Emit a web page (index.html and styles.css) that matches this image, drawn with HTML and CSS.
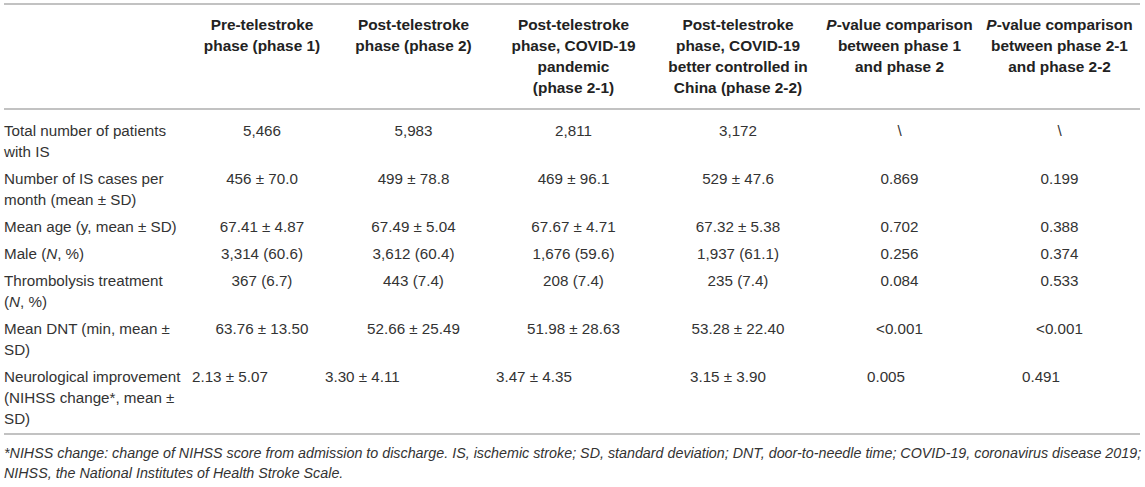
FILE: index.html
```html
<!DOCTYPE html>
<html>
<head>
<meta charset="utf-8">
<link rel="stylesheet" href="styles.css">
</head>
<body>
<div class="wrap">
<table class="tbl">
<colgroup>
<col class="c-label"><col class="c-1"><col class="c-2"><col class="c-3"><col class="c-4"><col class="c-5"><col class="c-6">
</colgroup>
<thead>
<tr>
<th></th>
<th>Pre-telestroke<br>phase (phase 1)</th>
<th>Post-telestroke<br>phase (phase 2)</th>
<th>Post-telestroke<br>phase, COVID-19<br>pandemic<br>(phase 2-1)</th>
<th>Post-telestroke<br>phase, COVID-19<br>better controlled in<br>China (phase 2-2)</th>
<th><i>P</i>-value comparison<br>between phase 1<br>and phase 2</th>
<th><i>P</i>-value comparison<br>between phase 2-1<br>and phase 2-2</th>
</tr>
</thead>
<tbody>
<tr class="first">
<td>Total number of patients<br>with IS</td>
<td>5,466</td><td>5,983</td><td>2,811</td><td>3,172</td><td>\</td><td>\</td>
</tr>
<tr>
<td>Number of IS cases per<br>month (mean ± SD)</td>
<td>456 ± 70.0</td><td>499 ± 78.8</td><td>469 ± 96.1</td><td>529 ± 47.6</td><td>0.869</td><td>0.199</td>
</tr>
<tr>
<td>Mean age (y, mean ± SD)</td>
<td>67.41 ± 4.87</td><td>67.49 ± 5.04</td><td>67.67 ± 4.71</td><td>67.32 ± 5.38</td><td>0.702</td><td>0.388</td>
</tr>
<tr>
<td>Male (<i>N</i>, %)</td>
<td>3,314 (60.6)</td><td>3,612 (60.4)</td><td>1,676 (59.6)</td><td>1,937 (61.1)</td><td>0.256</td><td>0.374</td>
</tr>
<tr>
<td>Thrombolysis treatment<br>(<i>N</i>, %)</td>
<td>367 (6.7)</td><td>443 (7.4)</td><td>208 (7.4)</td><td>235 (7.4)</td><td>0.084</td><td>0.533</td>
</tr>
<tr>
<td>Mean DNT (min, mean ±<br>SD)</td>
<td>63.76 ± 13.50</td><td>52.66 ± 25.49</td><td>51.98 ± 28.63</td><td>53.28 ± 22.40</td><td>&lt;0.001</td><td>&lt;0.001</td>
</tr>
<tr class="last">
<td>Neurological improvement<br>(NIHSS change*, mean ±<br>SD)</td>
<td>2.13 ± 5.07</td><td>3.30 ± 4.11</td><td>3.47 ± 4.35</td><td>3.15 ± 3.90</td><td>0.005</td><td>0.491</td>
</tr>
</tbody>
</table>
<p class="note">*NIHSS change: change of NIHSS score from admission to discharge. IS, ischemic stroke; SD, standard deviation; DNT, door-to-needle time; COVID-19, coronavirus disease 2019;<br>NIHSS, the National Institutes of Health Stroke Scale.</p>
</div>
</body>
</html>
```
FILE: styles.css
```css
html, body {
  margin: 0;
  padding: 0;
  background: #fff;
}
body {
  font-family: "Liberation Sans", Arial, Helvetica, sans-serif;
  font-size: 15.2px;
  color: #333;
}
.wrap {
  padding: 3px 5px 0 4px;
}
.tbl {
  width: 1136px;
  table-layout: fixed;
  border-collapse: collapse;
  border-top: 2px solid #c2c2c2;
  border-bottom: 2px solid #c2c2c2;
}
.c-label { width: 184px; }
.c-1 { width: 148px; }
.c-2 { width: 155px; }
.c-3 { width: 165px; }
.c-4 { width: 164px; }
.c-5 { width: 159px; }
.c-6 { width: 161px; }
.tbl th {
  font-weight: bold;
  font-size: 15.4px;
  color: #222;
  line-height: 21px;
  text-align: center;
  vertical-align: top;
  white-space: nowrap;
  padding: 9px 0 10px;
  border-bottom: 2px solid #c2c2c2;
}
.tbl td {
  line-height: 21px;
  text-align: center;
  vertical-align: top;
  padding: 3px 0;
  white-space: nowrap;
}
.tbl td:first-child {
  text-align: left;
}
.tbl tr.first td {
  padding-top: 10px;
}
.tbl tr.last td {
  text-align: left;
  padding-bottom: 4px;
}
.tbl tr.last td:nth-child(2) { padding-left: 4px; }
.tbl tr.last td:nth-child(3) { padding-left: 0; text-indent: -11px; }
.tbl tr.last td:nth-child(4) { padding-left: 5px; }
.tbl tr.last td:nth-child(5) { padding-left: 34px; }
.tbl tr.last td:nth-child(6) { padding-left: 47px; }
.tbl tr.last td:nth-child(7) { padding-left: 43px; }
.note {
  margin: 8px 0 0;
  font-size: 14.3px;
  font-style: italic;
  line-height: 20px;
  color: #333;
  white-space: nowrap;
}
```
